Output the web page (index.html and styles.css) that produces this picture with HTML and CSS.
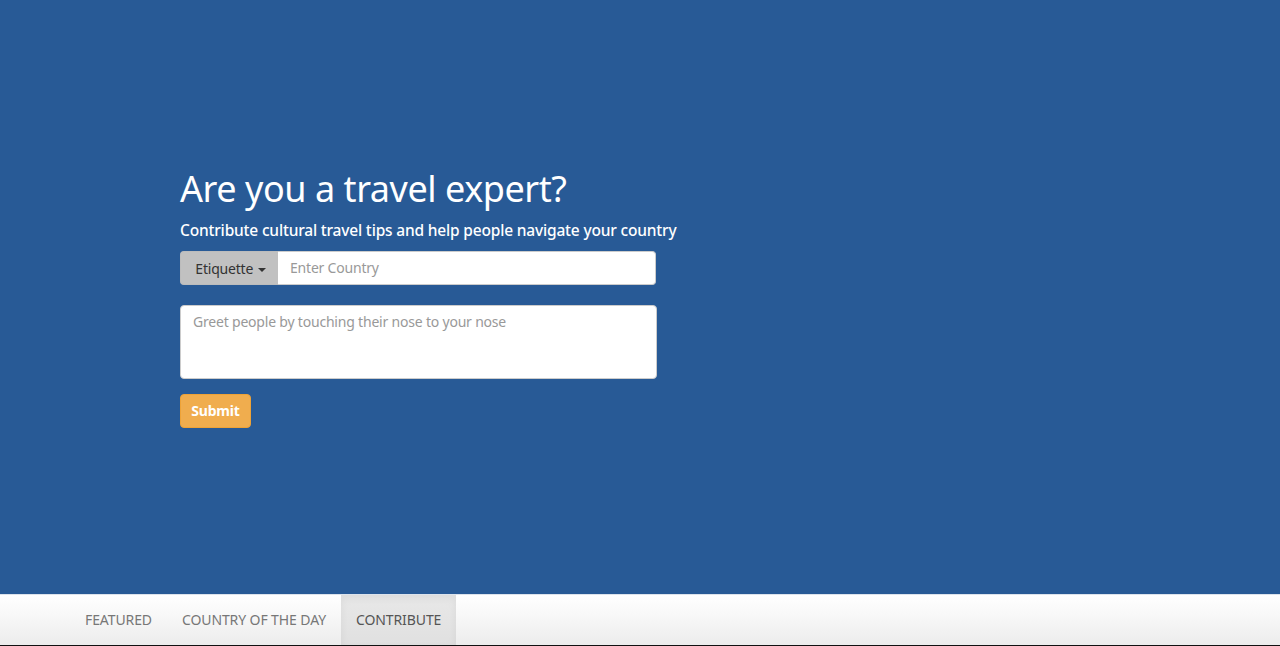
FILE: index.html
```html
<!DOCTYPE html>
<html>
<head>
<meta charset="utf-8">
<title>Contribute</title>
<link rel="stylesheet" href="styles.css">
</head>
<body>
<main class="hero">
  <div class="content">
    <h1 class="title">Are you a travel expert?</h1>
    <p class="subtitle">Contribute cultural travel tips and help people navigate your country</p>
    <form class="form">
      <div class="input-group">
        <button type="button" class="dropdown-btn">Etiquette <span class="caret"></span></button>
        <input class="country" type="text" placeholder="Enter Country">
      </div>
      <textarea class="tip" placeholder="Greet people by touching their nose to your nose"></textarea>
      <button type="button" class="submit">Submit</button>
    </form>
  </div>
</main>
<nav class="navbar">
  <ul class="nav">
    <li class="nav-item">FEATURED</li>
    <li class="nav-item">COUNTRY OF THE DAY</li>
    <li class="nav-item active">CONTRIBUTE</li>
  </ul>
</nav>
</body>
</html>
```

FILE: styles.css
```css
* { box-sizing: border-box; }
html, body { margin: 0; height: 100%; }
body {
  font-family: "Noto Sans", "Open Sans", sans-serif;
  background: #285a96;
  display: flex;
  flex-direction: column;
  overflow: hidden;
}
.hero {
  height: 594px;
  background: #285a96;
  padding: 166px 0 0 180px;
}
.content { width: 480px; }
.title {
  margin: 0;
  color: #fff;
  font-size: 36px;
  font-weight: 400;
  line-height: 46px;
  letter-spacing: -0.45px;
  white-space: nowrap;
}
.subtitle {
  margin: 8px 0 0;
  color: #fff;
  font-size: 15.5px;
  font-weight: 500;
  line-height: 20px;
  letter-spacing: -0.18px;
  white-space: nowrap;
}
.form { margin-top: 11px; display: flex; flex-direction: column; align-items: flex-start; }
.input-group {
  display: flex;
  width: 476px;
  height: 34px;
}
.dropdown-btn {
  width: 98px;
  height: 34px;
  border: 1px solid #bcbcbc;
  border-right: none;
  border-radius: 4px 0 0 4px;
  background: #c1c1c1;
  color: #333;
  font-family: inherit;
  font-size: 14px;
  padding: 0 0 0 2px;
  letter-spacing: -0.2px;
}
.caret {
  display: inline-block;
  width: 0; height: 0;
  margin-left: 1px;
  vertical-align: middle;
  border-top: 4px solid #333;
  border-left: 4px solid transparent;
  border-right: 4px solid transparent;
}
.country {
  flex: 1;
  height: 34px;
  border: 1px solid #ccc;
  border-left: none;
  border-radius: 0 4px 4px 0;
  padding: 0 12px 1px;
  font-family: inherit;
  font-size: 14px;
  color: #555;
  outline: none;
}
.country::placeholder, .tip::placeholder { color: #999; letter-spacing: -0.2px; }
.tip {
  margin-top: 20px;
  width: 477px;
  height: 74px;
  border: 1px solid #ccc;
  border-radius: 4px;
  padding: 7px 12px 8px;
  font-family: inherit;
  font-size: 14px;
  line-height: 18px;
  resize: none;
  outline: none;
}
.submit {
  margin-top: 15px;
  width: 71px;
  height: 34px;
  border: 1px solid #eea236;
  border-radius: 4px;
  background: #f0ad4e;
  color: #fff;
  font-family: inherit;
  font-size: 14px;
  font-weight: 700;
  padding: 0 0 1px;
  letter-spacing: -0.2px;
}
.navbar {
  height: 52px;
  background: linear-gradient(to bottom, #fff 0%, #f8f8f8 40%, #ececec 100%);
  border-top: 1px solid #dce3ec;
  border-bottom: 1px solid #111;
  padding-left: 70px;
}
.nav {
  list-style: none;
  margin: 0;
  padding: 0;
  display: flex;
  height: 50px;
}
.nav-item {
  padding: 0 15px;
  line-height: 50px;
  font-size: 14px;
  color: #777;
  letter-spacing: -0.1px;
}
.nav-item.active {
  color: #555;
  background: linear-gradient(to bottom, #e8e8e8 0%, #e0e0e0 100%);
  box-shadow: inset 0 3px 9px rgba(0,0,0,0.06);
}
```
